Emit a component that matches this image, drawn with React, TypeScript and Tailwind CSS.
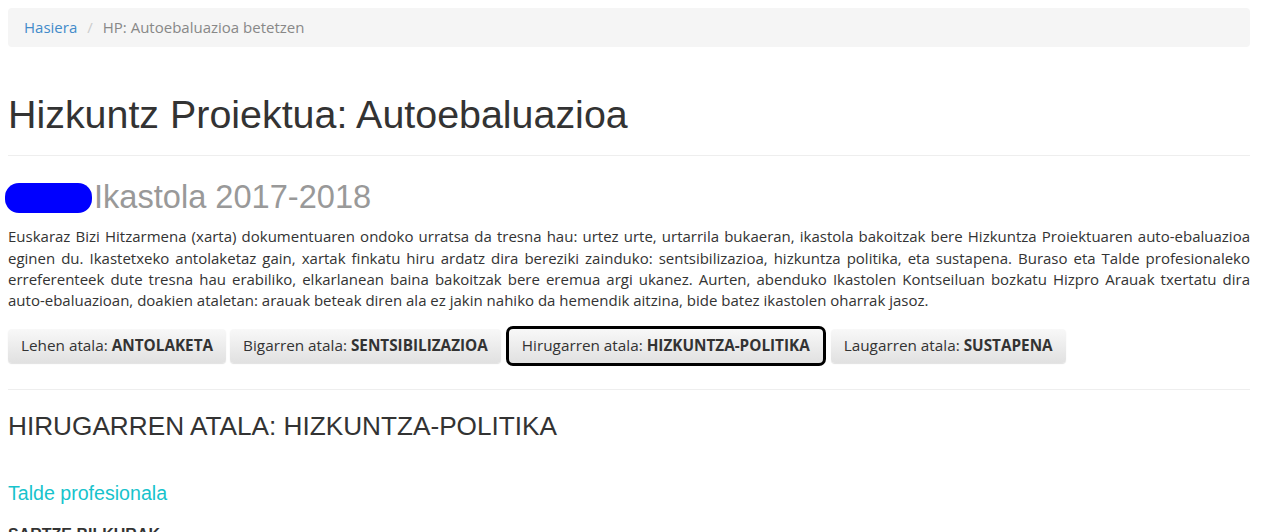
import React from 'react';

const sections = [
  { label: 'Lehen atala:', name: 'ANTOLAKETA' },
  { label: 'Bigarren atala:', name: 'SENTSIBILIZAZIOA' },
  { label: 'Hirugarren atala:', name: 'HIZKUNTZA-POLITIKA', active: true },
  { label: 'Laugarren atala:', name: 'SUSTAPENA' },
];

export default function App() {
  return (
    <div className="min-h-[532px] bg-white pl-2 pr-[15px] pt-2 text-[#333] font-['Open_Sans',sans-serif] text-[15px] overflow-hidden">
      {/* Breadcrumb */}
      <div className="h-[39px] flex items-center px-4 bg-[#f5f5f5] rounded text-[15px]">
        <a href="#" className="text-[#428bca]">Hasiera</a>
        <span className="px-[10px] text-[#ccc]">/</span>
        <span className="text-[#888]">HP: Autoebaluazioa betetzen</span>
      </div>

      {/* Page header */}
      <h1 className="mt-[46px] font-['Liberation_Sans',Arial,sans-serif] text-[39.4px] leading-[1.1] text-[#333]">
        Hizkuntz Proiektua: Autoebaluazioa
      </h1>
      <div className="mt-[19px] border-t border-[#eee]" />

      {/* School + year */}
      <div className="mt-[23px] flex items-center h-[35px] font-['Liberation_Sans',Arial,sans-serif] text-[32.6px] leading-[1.1] text-[#999]">
        <span className="-ml-[3px] mr-[2px] mt-[3px] inline-block w-[87px] h-[30px] rounded-[14px] bg-[#0000ff]" />
        <span>Ikastola 2017-2018</span>
      </div>

      <p className="mt-[12px] text-justify leading-[21.3px]">
        Euskaraz Bizi Hitzarmena (xarta) dokumentuaren ondoko urratsa da tresna hau: urtez urte, urtarrila bukaeran, ikastola bakoitzak bere Hizkuntza Proiektuaren <span className="whitespace-nowrap">auto-ebaluazioa</span> eginen du. Ikastetxeko antolaketaz gain, xartak finkatu hiru ardatz dira bereziki zainduko: sentsibilizazioa, hizkuntza politika, eta sustapena. Buraso eta Talde profesionaleko erreferenteek dute tresna hau erabiliko, elkarlanean baina bakoitzak bere eremua argi ukanez. Aurten, abenduko Ikastolen Kontseiluan bozkatu Hizpro Arauak txertatu dira <span className="whitespace-nowrap">auto-ebaluazioan,</span> doakien ataletan: arauak beteak diren ala ez jakin nahiko da hemendik aitzina, bide batez ikastolen oharrak jasoz.
      </p>

      {/* Section buttons */}
      <div className="mt-[17px] flex items-center gap-[4px]">
        {sections.map((s) => (
          <button
            key={s.name}
            className={`h-[34px] px-[13px] rounded-[4px] bg-gradient-to-b from-[#f8f8f8] to-[#e1e1e1] text-[#333] text-[15.3px] shadow-[0_1px_1px_rgba(0,0,0,0.12)] whitespace-nowrap ${
              s.active ? 'outline-[3px] outline outline-black mx-[4px]' : ''
            }`}
          >
            {s.label} <b className="font-bold">{s.name}</b>
          </button>
        ))}
      </div>
      <div className="mt-[26px] border-t border-[#eee]" />

      <h3 className="mt-[22px] font-['Liberation_Sans',Arial,sans-serif] text-[26.2px] leading-[1.1] text-[#333]">
        HIRUGARREN ATALA: HIZKUNTZA-POLITIKA
      </h3>

      <h4 className="mt-[43px] font-['Liberation_Sans',Arial,sans-serif] text-[19.6px] leading-[1.1] text-[#17c3cc]">
        Talde profesionala
      </h4>

      <h5 className="mt-[19px] font-['Liberation_Sans',Arial,sans-serif] font-bold text-[16px] leading-[1.4] text-[#333]">
        SARTZE BILKURAK
      </h5>
    </div>
  );
}
